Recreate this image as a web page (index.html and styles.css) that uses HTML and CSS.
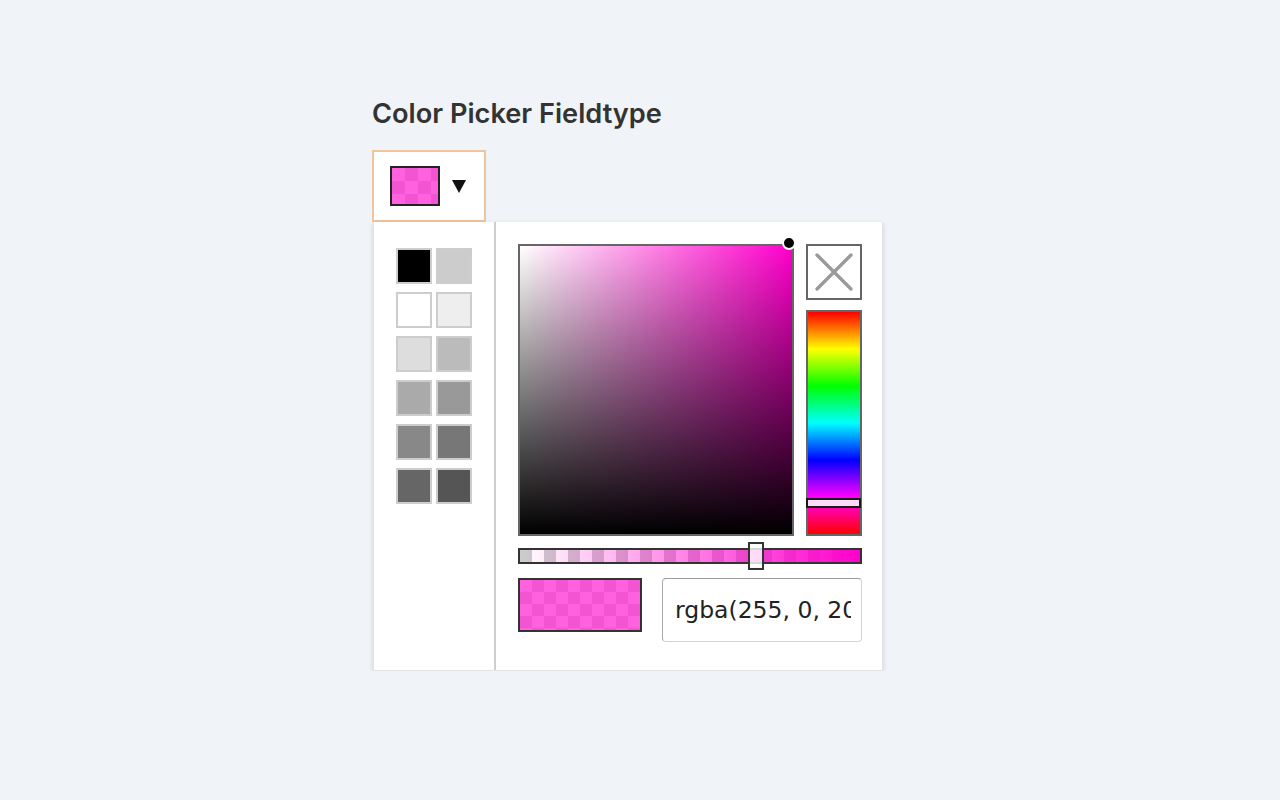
FILE: index.html
```html
<!DOCTYPE html>
<html lang="en">
<head>
<meta charset="utf-8">
<title>Color Picker Fieldtype</title>
<link rel="stylesheet" href="styles.css">
</head>
<body>
<main class="page">
  <h1 class="title">Color Picker Fieldtype</h1>
  <div class="field">
    <div class="replacer">
      <div class="rep-preview checker"><div class="fill"></div></div>
      <svg class="rep-arrow" width="14" height="13" viewBox="0 0 14 13"><polygon points="0,0 14,0 7,13" fill="#111"/></svg>
    </div>
    <div class="sp-container">
      <div class="palette">
        <span class="sw" style="background:#000"></span>
        <span class="sw" style="background:#ccc"></span>
        <span class="sw" style="background:#fff"></span>
        <span class="sw" style="background:#eee"></span>
        <span class="sw" style="background:#ddd"></span>
        <span class="sw" style="background:#bbb"></span>
        <span class="sw" style="background:#aaa"></span>
        <span class="sw" style="background:#999"></span>
        <span class="sw" style="background:#888"></span>
        <span class="sw" style="background:#777"></span>
        <span class="sw" style="background:#666"></span>
        <span class="sw" style="background:#555"></span>
      </div>
      <div class="picker">
        <div class="top-row">
          <div class="sat">
            <div class="sat-white"></div>
            <div class="sat-black"></div>
            <span class="sat-dot"></span>
          </div>
          <div class="right-col">
            <button class="clear" type="button" aria-label="Clear">
              <svg width="52" height="52" viewBox="0 0 52 52"><path d="M9 9 L43 43 M43 9 L9 43" stroke="#9a9a9a" stroke-width="3.4" fill="none" stroke-linecap="round"/></svg>
            </button>
            <div class="hue">
              <span class="hue-handle"></span>
            </div>
          </div>
        </div>
        <div class="alpha">
          <div class="alpha-grad"></div>
          <span class="alpha-handle"></span>
        </div>
        <div class="bottom-row">
          <div class="current checker"><div class="fill"></div></div>
          <input class="value" type="text" value="rgba(255, 0, 204, 0.69)">
        </div>
      </div>
    </div>
  </div>
</main>
</body>
</html>
```

FILE: styles.css
```css
html, body {
  margin: 0;
  padding: 0;
  background: #f0f3f8;
}
body {
  font-family: Inter, "Liberation Sans", Arial, sans-serif;
  color: #333;
}
.page {
  padding: 98px 0 0 372px;
}
.title {
  margin: 0 0 20px 0;
  font-size: 27.2px;
  line-height: 32px;
  font-weight: 600;
  color: #333;
  letter-spacing: 0;
}
.field {
  display: flex;
  flex-direction: column;
  align-items: flex-start;
}
.replacer {
  box-sizing: border-box;
  width: 114px;
  height: 72px;
  border: 2px solid #f0c49c;
  background: #fff;
  display: flex;
  align-items: center;
  padding-left: 16px;
  gap: 12px;
}
.checker {
  background-color: #fff;
  background-image: conic-gradient(#ddd 25%, #fff 0 50%, #ddd 0 75%, #fff 0);
  background-size: 24px 24px;
}
.fill {
  width: 100%;
  height: 100%;
  background: rgba(255, 0, 204, 0.62);
}
.rep-preview {
  box-sizing: border-box;
  width: 50px;
  height: 40px;
  border: 2px solid #222;
  background-size: 26px 26px;
}
.rep-arrow {
  display: block;
  margin-top: 1px;
}
.sp-container {
  box-sizing: border-box;
  margin-left: 1px;
  width: 510px;
  height: 449px;
  border: 1px solid #e3e3e3;
  border-top: none;
  background: #fff;
  display: flex;
  box-shadow: 0 2px 5px rgba(0, 0, 0, 0.14);
}
.palette {
  box-sizing: border-box;
  width: 122px;
  border-right: 2px solid #cfcfcf;
  padding: 26px 0 0 22px;
  display: grid;
  grid-template-columns: 36px 36px;
  grid-auto-rows: 36px;
  column-gap: 4px;
  row-gap: 8px;
  align-content: start;
}
.sw {
  box-sizing: border-box;
  display: block;
  width: 36px;
  height: 36px;
  border: 2px solid #cdcdcd;
}
.picker {
  box-sizing: border-box;
  flex: 1;
  padding: 22px 20px 0 22px;
  display: flex;
  flex-direction: column;
}
.top-row {
  display: flex;
  gap: 12px;
  height: 292px;
}
.sat {
  position: relative;
  box-sizing: border-box;
  width: 276px;
  height: 292px;
  border: 2px solid #666;
  background: rgb(255, 0, 204);
}
.sat-white {
  position: absolute;
  inset: 0;
  background: linear-gradient(to right, #fff, rgba(255, 255, 255, 0));
}
.sat-black {
  position: absolute;
  inset: 0;
  background: linear-gradient(to top, #000, rgba(0, 0, 0, 0));
}
.sat-dot {
  position: absolute;
  right: -4px;
  top: -10px;
  box-sizing: border-box;
  width: 14px;
  height: 14px;
  border-radius: 50%;
  background: #000;
  border: 2px solid #fff;
}
.right-col {
  display: flex;
  flex-direction: column;
  gap: 10px;
  width: 56px;
}
.clear {
  box-sizing: border-box;
  width: 56px;
  height: 56px;
  padding: 0;
  margin: 0;
  border: 2px solid #666;
  background: #fff;
  display: flex;
  align-items: center;
  justify-content: center;
}
.clear svg {
  display: block;
  filter: blur(0.7px);
}
.hue {
  position: relative;
  box-sizing: border-box;
  width: 56px;
  height: 226px;
  border: 2px solid #666;
  background: linear-gradient(to bottom, #ff0000 0%, #ffff00 16.7%, #00ff00 33.3%, #00ffff 50%, #0000ff 66.7%, #ff00ff 83.3%, #ff0000 100%);
}
.hue-handle {
  position: absolute;
  left: -2px;
  right: -1px;
  top: 186px;
  box-sizing: border-box;
  height: 10px;
  border: 2px solid #1a1a1a;
  background: rgba(255, 255, 255, 0.85);
}
.alpha {
  position: relative;
  box-sizing: border-box;
  margin-top: 12px;
  height: 16px;
  border: 2px solid #333;
  background-color: #fff;
  background-image: linear-gradient(to right, #ccc 50%, #fff 50%);
  background-size: 24px 12px;
}
.alpha-grad {
  position: absolute;
  inset: 0;
  background: linear-gradient(to right, rgba(255, 0, 204, 0), rgb(255, 0, 204));
}
.alpha-handle {
  position: absolute;
  left: 228px;
  top: -8px;
  box-sizing: border-box;
  width: 16px;
  height: 28px;
  border: 2px solid #333;
  background: rgba(255, 255, 255, 0.8);
}
.bottom-row {
  margin-top: 14px;
  display: flex;
  align-items: flex-start;
  gap: 20px;
}
.current {
  box-sizing: border-box;
  width: 124px;
  height: 54px;
  border: 2px solid #333;
}
.value {
  box-sizing: border-box;
  width: 200px;
  height: 64px;
  margin: 0;
  padding: 0 10px 0 12px;
  border: 1px solid #d4d4d4;
  border-top-color: #9a9a9a;
  border-left-color: #a8a8a8;
  border-radius: 4px;
  font-family: "DejaVu Sans", Verdana, sans-serif;
  font-size: 23.5px;
  color: #222;
  background: #fff;
  outline: none;
}
```
